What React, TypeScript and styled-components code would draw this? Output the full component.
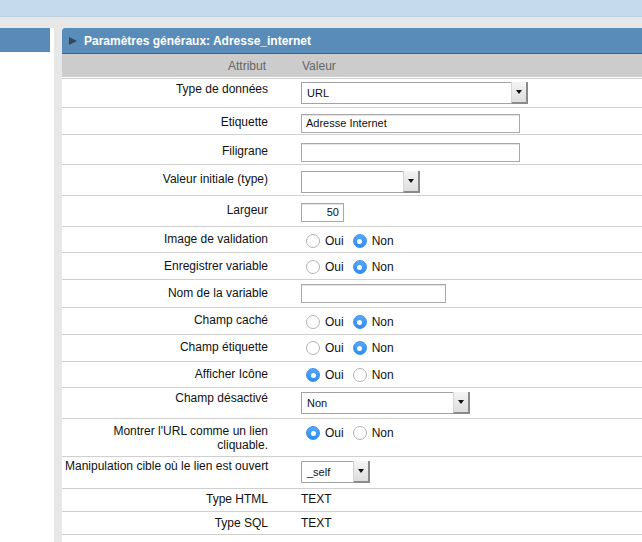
import React from "react";
import styled, { createGlobalStyle } from "styled-components";

const Global = createGlobalStyle`
  html, body { margin: 0; padding: 0; }
  body {
    width: 642px; height: 542px; overflow: hidden;
    background: #e7e7e7;
    font-family: "Liberation Sans", Arial, Helvetica, sans-serif;
    font-size: 12px; color: #111;
  }
`;

const Page = styled.div`
  display: flex; flex-direction: column; width: 642px; height: 542px;
`;
const TopBand = styled.div`
  height: 16px; background: #c6daed; border-bottom: 1px solid #bcd0e2; flex: none;
`;
const Content = styled.div`
  flex: 1; display: flex; padding-top: 11px; gap: 8px; min-height: 0;
`;
const LeftPanel = styled.div`
  width: 54px; flex: none; background: #fff; display: flex; flex-direction: column;
`;
const LeftBar = styled.div`
  width: 50px; height: 24px; background: #5a8bb8;
`;
const Main = styled.div`
  flex: 1; background: #fff; display: flex; flex-direction: column; min-width: 0;
`;
const PanelHeader = styled.div`
  height: 25px; background: #5a8cba; border-bottom: 1px solid #3e5f80;
  border-top-left-radius: 3px;
  display: flex; align-items: center; gap: 7px; padding-left: 7px;
  color: #fff; font-weight: bold; font-size: 12px;
`;
const Tri = styled.span`
  width: 0; height: 0; border-left: 8px solid #33475c;
  border-top: 4.5px solid transparent; border-bottom: 4.5px solid transparent;
`;
const ColHeader = styled.div`
  display: grid; grid-template-columns: 228px 1fr; height: 23px;
  background: #cccccc; color: #666; align-items: center;
  border-bottom: 1px solid #fff; box-shadow: 0 1px 0 #cfcfcf; margin-bottom: 1px;
`;
const ColLabel = styled.div`
  text-align: right; padding-right: 24px;
`;
const ColValue = styled.div`
  padding-left: 12px;
`;
const Row = styled.div<{ $h: number }>`
  display: grid; grid-template-columns: 228px 1fr; height: ${(p) => p.$h}px;
  box-sizing: border-box; border-bottom: 1px solid #d0d0d0; flex: none;
`;
const Label = styled.div<{ $t: number; $wrap?: boolean }>`
  text-align: right; padding: ${(p) => p.$t}px 22px 0 3px; line-height: 14px;
  white-space: ${(p) => (p.$wrap ? "normal" : "nowrap")};
`;
const Value = styled.div<{ $t: number }>`
  padding: ${(p) => p.$t}px 0 0 11px; line-height: 14px;
`;
const TextInput = styled.div<{ $w: number; $right?: boolean }>`
  width: ${(p) => p.$w}px; height: 19px; box-sizing: border-box;
  border: 1px solid #a9a9a9; box-shadow: inset 0 1px 0 #e4e4e4;
  font-size: 11px; line-height: 17px; padding: 0 4px; background: #fff;
  text-align: ${(p) => (p.$right ? "right" : "left")};
`;
const Select = styled.div<{ $w: number }>`
  width: ${(p) => p.$w}px; height: 22px; box-sizing: border-box;
  border: 1px solid #a3a3a3; background: #fff; display: flex;
  font-size: 11px;
`;
const SelectText = styled.div`
  flex: 1; padding-left: 5px; line-height: 20px;
`;
const SelectBtn = styled.div`
  width: 14px; background: linear-gradient(#f4f4f4, #dedede);
  border-left: 1px solid #d4d4d4; border-right: 2px solid #8a8a8a; border-bottom: 2px solid #8a8a8a;
  margin: -1px -1px -1px 0; display: flex; align-items: center; justify-content: center;
`;
const Arrow = styled.span`
  width: 0; height: 0; border-top: 4px solid #111;
  border-left: 3px solid transparent; border-right: 3px solid transparent;
`;
const RadioGroup = styled.div`
  display: flex; align-items: center; height: 14px; padding-left: 5px;
`;
const RadioCircle = styled.span<{ $on: boolean }>`
  width: 14px; height: 14px; box-sizing: border-box; border-radius: 50%;
  border: 1px solid ${(p) => (p.$on ? "#3a8ff0" : "#b3b3b3")};
  background: ${(p) => (p.$on ? "linear-gradient(#55a8fc, #2f8cf2)" : "#fff")};
  display: flex; align-items: center; justify-content: center; margin-right: 5px;
  &::after {
    content: ""; width: 5px; height: 5px; border-radius: 50%;
    background: #fff; display: ${(p) => (p.$on ? "block" : "none")};
  }
`;
const RadioText = styled.span`
  margin-right: 9px; font-size: 12px;
`;
const Plain = styled.div`
  font-size: 12px; padding-left: 0;
`;

const Radios = ({ yes }: { yes: boolean }) => (
  <RadioGroup>
    <RadioCircle $on={yes} />
    <RadioText>Oui</RadioText>
    <RadioCircle $on={!yes} />
    <RadioText>Non</RadioText>
  </RadioGroup>
);

const Sel = ({ w, text }: { w: number; text?: string }) => (
  <Select $w={w}>
    <SelectText>{text}</SelectText>
    <SelectBtn>
      <Arrow />
    </SelectBtn>
  </Select>
);

type R = { label: React.ReactNode; h: number; lt: number; vt: number; v: React.ReactNode; wrap?: boolean };

const rows: R[] = [
  { label: "Type de données", h: 29, lt: 3, vt: 3, v: <Sel w={227} text="URL" /> },
  { label: "Etiquette", h: 27, lt: 7, vt: 6, v: <TextInput $w={219}>Adresse Internet</TextInput> },
  { label: "Filigrane", h: 30, lt: 9, vt: 8, v: <TextInput $w={219} /> },
  { label: "Valeur initiale (type)", h: 31, lt: 7, vt: 6, v: <Sel w={119} /> },
  { label: "Largeur", h: 31, lt: 7, vt: 7, v: <TextInput $w={43} $right>50</TextInput> },
  { label: "Image de validation", h: 26, lt: 5, vt: 7, v: <Radios yes={false} /> },
  { label: "Enregistrer variable", h: 27, lt: 6, vt: 7, v: <Radios yes={false} /> },
  { label: "Nom de la variable", h: 28, lt: 6, vt: 4, v: <TextInput $w={145} /> },
  { label: "Champ caché", h: 27, lt: 5, vt: 7, v: <Radios yes={false} /> },
  { label: "Champ étiquette", h: 27, lt: 5, vt: 6, v: <Radios yes={false} /> },
  { label: "Afficher Icône", h: 26, lt: 5, vt: 6, v: <Radios yes={true} /> },
  { label: "Champ désactivé", h: 31, lt: 3, vt: 4, v: <Sel w={169} text="Non" /> },
  {
    label: "Montrer l'URL comme un lien cliquable.",
    h: 38, lt: 5, vt: 7, v: <Radios yes={true} />, wrap: true,
  },
  { label: "Manipulation cible où le lien est ouvert", h: 32, lt: 2, vt: 4, v: <Sel w={69} text="_self" /> },
  { label: "Type HTML", h: 23, lt: 3, vt: 3, v: <Plain>TEXT</Plain> },
  { label: "Type SQL", h: 23, lt: 4, vt: 4, v: <Plain>TEXT</Plain> },
];

export default function App() {
  return (
    <>
      <Global />
      <Page>
        <TopBand />
        <Content>
          <LeftPanel>
            <LeftBar />
          </LeftPanel>
          <Main>
            <PanelHeader>
              <Tri />
              Paramètres généraux: Adresse_internet
            </PanelHeader>
            <ColHeader>
              <ColLabel>Attribut</ColLabel>
              <ColValue>Valeur</ColValue>
            </ColHeader>
            {rows.map((r, i) => (
              <Row key={i} $h={r.h}>
                <Label $t={r.lt} $wrap={r.wrap}>{r.label}</Label>
                <Value $t={r.vt}>{r.v}</Value>
              </Row>
            ))}
          </Main>
        </Content>
      </Page>
    </>
  );
}
